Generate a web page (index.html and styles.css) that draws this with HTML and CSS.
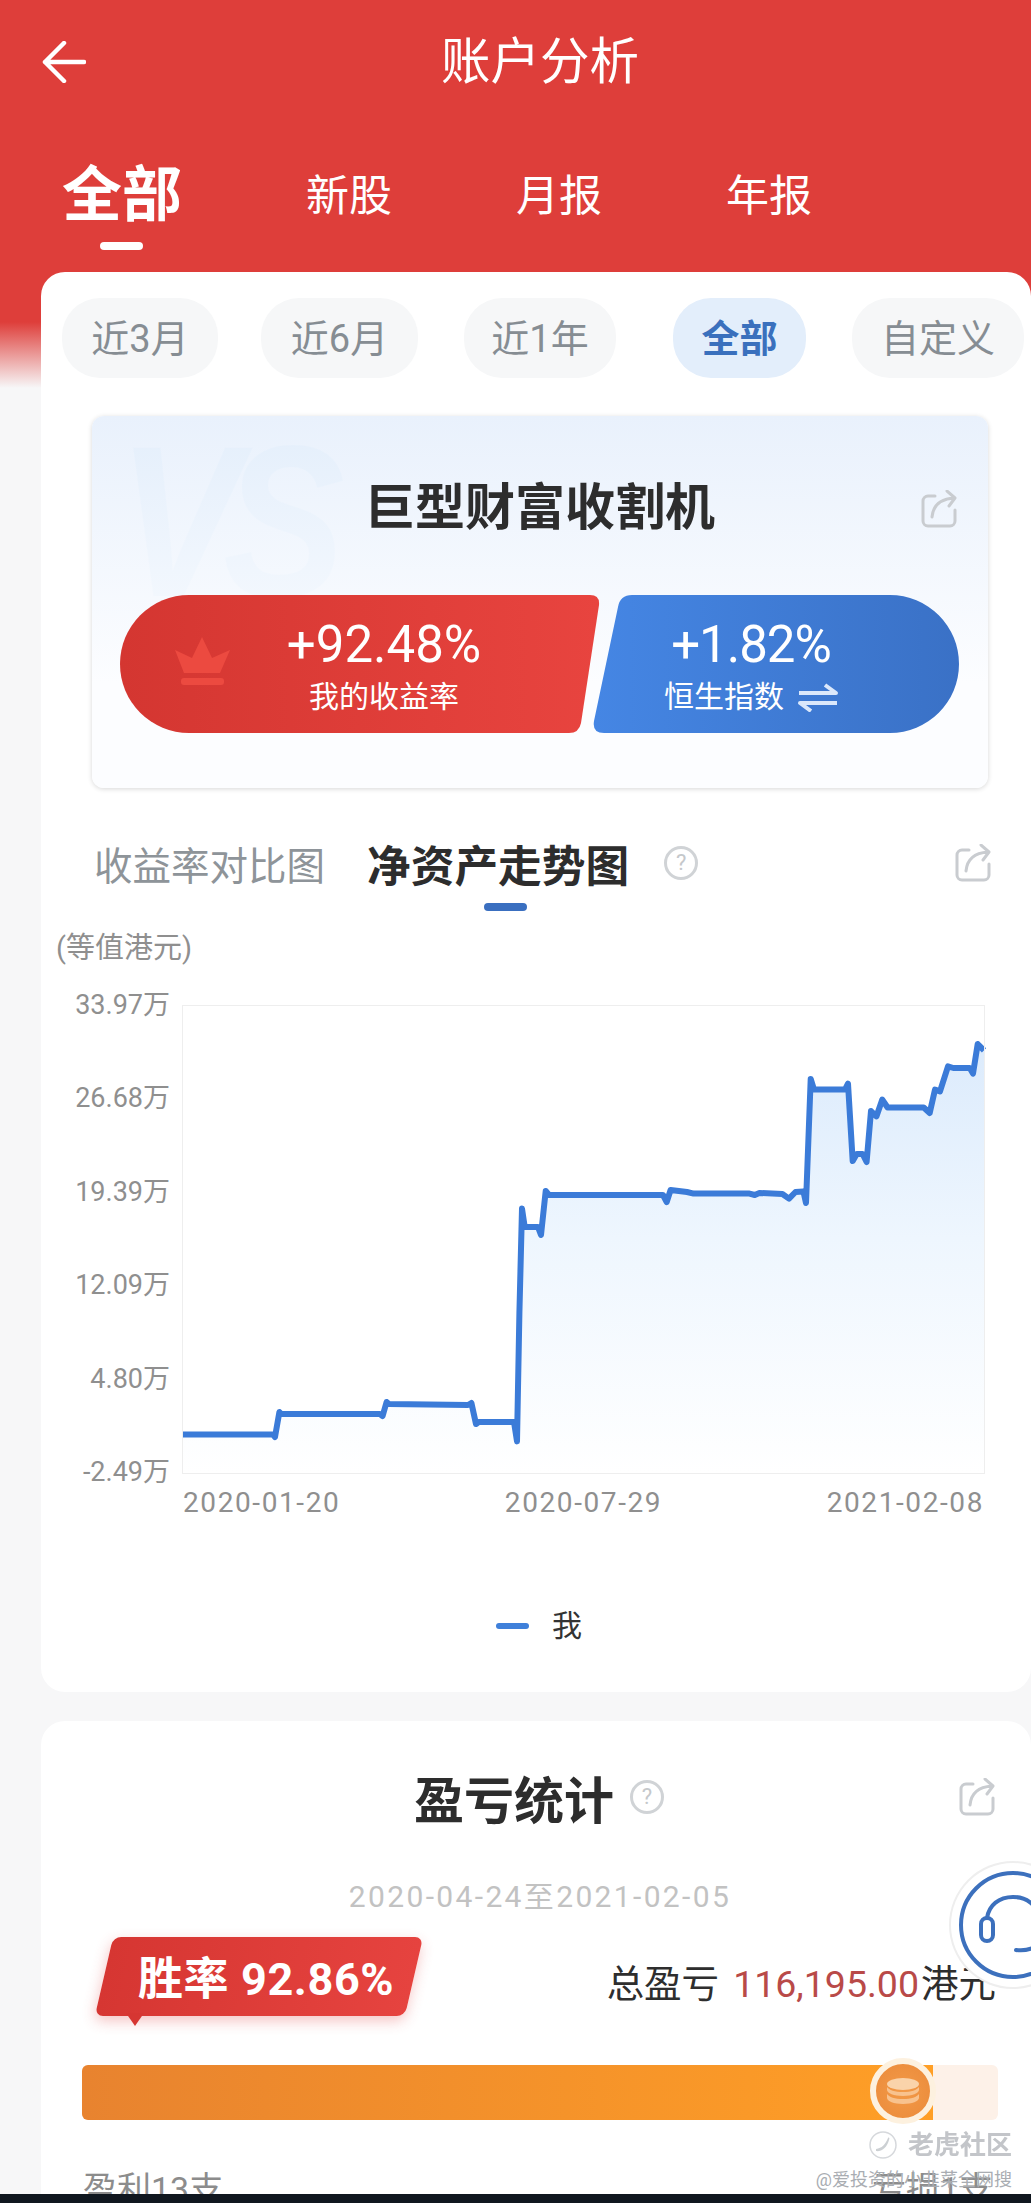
FILE: index.html
```html
<!DOCTYPE html>
<html lang="zh-CN">
<head>
  <meta charset="UTF-8" />
  <meta name="viewport" content="width=device-width, initial-scale=1.0" />
  <title>账户分析</title>
  <link rel="stylesheet" href="styles.css">
</head>
<body>
  <svg class="defs" width="0" height="0">
    <symbol id="share" viewBox="0 0 38 38">
      <path d="M15 6H8a5 5 0 0 0-5 5v20a5 5 0 0 0 5 5h22a5 5 0 0 0 5-5V20" fill="none" stroke="currentColor" stroke-width="3" stroke-linecap="round"/>
      <path d="M12 27C13 16 20 9 34 8M27 1l8 7-6 8" fill="none" stroke="currentColor" stroke-width="3" stroke-linecap="round" stroke-linejoin="round"/>
    </symbol>
  </svg>

  <div class="page">
    <div class="topbar">
      <svg class="back" width="44" height="42" viewBox="0 0 44 42">
        <path d="M42 21H3M22 2 3 21l19 19" fill="none" stroke="#fff" stroke-width="4.5" stroke-linecap="round" stroke-linejoin="round"/>
      </svg>
      <div class="page-title">账户分析</div>
    </div>

    <div class="main-tabs">
      <div class="main-tab main-tab-on">全部<div class="main-tab-bar"></div></div>
      <div class="main-tab">新股</div>
      <div class="main-tab">月报</div>
      <div class="main-tab">年报</div>
    </div>

    <div class="card card-first">
      <div class="pills">
        <div class="pill pill-a">近3月</div>
        <div class="pill pill-b">近6月</div>
        <div class="pill pill-c">近1年</div>
        <div class="pill pill-d pill-on">全部</div>
        <div class="pill pill-e">自定义</div>
      </div>

      <div class="vs-card">
        <div class="vs-mark">VS</div>
        <svg class="vs-share"><use href="#share"/></svg>
        <div class="vs-title">巨型财富收割机</div>
        <div class="vs-row">
          <svg class="vs-shapes" width="839" height="138" viewBox="0 0 839 138">
            <defs>
              <linearGradient id="redpill" x1="0" x2="1" y1="0" y2="0">
                <stop offset="0" stop-color="#d43631"/>
                <stop offset="1" stop-color="#e8443f"/>
              </linearGradient>
              <linearGradient id="bluepill" x1="0" x2="1" y1="0" y2="0">
                <stop offset="0" stop-color="#4586e4"/>
                <stop offset="1" stop-color="#3a71c6"/>
              </linearGradient>
            </defs>
            <path d="M69 0H470Q480 0 479 10L461 128Q459 138 449 138H69A69 69 0 0 1 69 0Z" fill="url(#redpill)"/>
            <path d="M512 0H770A69 69 0 0 1 770 138H484Q472 138 474 126L498 12Q500 0 512 0Z" fill="url(#bluepill)"/>
            <path d="M82 42 92 63l18-8-10 23H64L55 55l17 8Z" fill="#ec4a40"/>
            <rect x="61" y="83" width="43" height="7" rx="3" fill="#ec4a40"/>
          </svg>
          <div class="vs-side vs-side-red">
            <div class="vs-value">+92.48%</div>
            <div class="vs-label">我的收益率</div>
          </div>
          <div class="vs-side vs-side-blue">
            <div class="vs-value">+1.82%</div>
            <div class="vs-label">恒生指数
              <svg class="swap" width="40" height="29" viewBox="0 0 40 29">
                <path d="M1 10H38L27 2M39 20H2l11 8" fill="none" stroke="#dbe8fb" stroke-width="4" stroke-linejoin="round"/>
              </svg>
            </div>
          </div>
        </div>
      </div>

      <div class="chart-tabs">
        <div class="chart-tab">收益率对比图</div>
        <div class="chart-tab chart-tab-on">净资产走势图</div>
        <div class="help">?</div>
        <svg class="share-btn"><use href="#share"/></svg>
      </div>
      <div class="chart-tab-bar"></div>

      <div class="unit">(等值港元)</div>
      <div class="chart">
        <div class="y-axis">
          <span>33.97万</span>
          <span>26.68万</span>
          <span>19.39万</span>
          <span>12.09万</span>
          <span>4.80万</span>
          <span>-2.49万</span>
        </div>
        <div class="plot">
          <svg width="801" height="467" viewBox="0 0 801 467">
            <defs>
              <linearGradient id="area" gradientUnits="userSpaceOnUse" x1="0" x2="0" y1="40" y2="467">
                <stop offset="0" stop-color="#dcebfc"/>
                <stop offset="0.45" stop-color="#eef6fe"/>
                <stop offset="1" stop-color="#ffffff"/>
              </linearGradient>
            </defs>
            <path fill="url(#area)" d="M0 428.6H90L92 431 96.4 406 98.4 408H197L199.6 410 203.6 396 206 398 285 399 288.4 397 293 418 295.6 416H331L334 435.4 336.4 307 339 202.6 341.7 221H355L358 229 362.7 185 366 189H480L483.7 196 487.6 184 504 186 510.6 187.6H566.5L571.8 189 576.4 187 599.4 188 606 192.6 612.5 186 620.4 185.4 623 197 627.7 73 631 83.6H662L665 77.6 669.7 155 673.7 148H679.6L683.6 156 688 105 693.4 110.4 699.3 93.6 704.6 101.5H740.7L746.7 107 752 83.6 757 85.4 765 60.4 770.3 62H786.8L790 67.6 794.7 38 801 44.4V467H0Z"/>
            <path fill="none" stroke="#3b7bd8" stroke-width="6" stroke-linejoin="round" d="M0 428.6H90L92 431 96.4 406 98.4 408H197L199.6 410 203.6 396 206 398 285 399 288.4 397 293 418 295.6 416H331L334 435.4 336.4 307 339 202.6 341.7 221H355L358 229 362.7 185 366 189H480L483.7 196 487.6 184 504 186 510.6 187.6H566.5L571.8 189 576.4 187 599.4 188 606 192.6 612.5 186 620.4 185.4 623 197 627.7 73 631 83.6H662L665 77.6 669.7 155 673.7 148H679.6L683.6 156 688 105 693.4 110.4 699.3 93.6 704.6 101.5H740.7L746.7 107 752 83.6 757 85.4 765 60.4 770.3 62H786.8L790 67.6 794.7 38 801 44.4"/>
          </svg>
        </div>
      </div>
      <div class="x-axis">
        <span>2020-01-20</span>
        <span>2020-07-29</span>
        <span>2021-02-08</span>
      </div>
      <div class="legend">
        <div class="legend-line"></div>
        <div class="legend-name">我</div>
      </div>
    </div>

    <div class="card card-second">
      <div class="stat-head">
        <div class="stat-title">盈亏统计</div>
        <div class="help">?</div>
        <svg class="share-btn"><use href="#share"/></svg>
      </div>
      <div class="stat-date">2020-04-24至2021-02-05</div>
      <div class="stat-row">
        <div class="badge">胜率 92.86%</div>
        <div class="total">总盈亏<span class="total-num">116,195.00</span>港元</div>
      </div>
      <div class="bar">
        <div class="bar-fill" style="width: 92.86%">
          <div class="coin">
            <svg width="32" height="27" viewBox="0 0 32 27">
              <ellipse cx="16" cy="6" rx="16" ry="6" fill="#fad3aa"/>
              <path d="M0 9v3c0 3 7 6 16 6s16-3 16-6V9c-2 3-8 5-16 5S2 12 0 9Z" fill="#f8c28e"/>
              <path d="M0 16v4c0 3 7 6 16 6s16-3 16-6v-4c-2 3-8 5-16 5S2 19 0 16Z" fill="#f8c28e"/>
            </svg>
          </div>
        </div>
      </div>
      <div class="bar-labels">
        <div>盈利13支</div>
        <div>亏损1支</div>
      </div>
    </div>

    <div class="service">
      <svg width="124" height="124" viewBox="0 0 124 124">
        <circle cx="62" cy="62" r="52" fill="none" stroke="#3c70bd" stroke-width="4"/>
        <rect x="30" y="55" width="12" height="23" rx="6" fill="none" stroke="#3c70bd" stroke-width="4"/>
        <path d="M36 55C38 42 48 34 62 34S86 42 88 55M65 87C72 88 78 87 84 84" fill="none" stroke="#3c70bd" stroke-width="4" stroke-linecap="round"/>
      </svg>
    </div>

    <div class="watermark">
      <div class="wm-top">
        <svg width="30" height="28" viewBox="0 0 30 28">
          <circle cx="15" cy="14" r="13" fill="none" stroke="#cfd2d6" stroke-width="1.5"/>
          <path d="M8 20c5 1 11-3 13-11 1-2 0-3-1-2-3 7-6 10-12 11" fill="#c4c8cc"/>
        </svg>
        <span>老虎社区</span>
      </div>
      <div class="wm-user">@爱投资的小韭菜全网搜</div>
    </div>

    <div class="bottom-bar"></div>
  </div>
</body>
</html>
```

FILE: styles.css
```css
* {
  box-sizing: border-box;
}

body {
  margin: 0;
  font-family: Roboto, "Noto Sans CJK SC", sans-serif;
}

.defs {
  position: absolute;
}

.page {
  position: relative;
  width: 1031px;
  height: 2203px;
  overflow: hidden;
  background: linear-gradient(#de3e3a 0, #de3e3a 322px, #f7f7f8 388px);
}

.topbar {
  height: 124px;
  padding-left: 42px;
  display: flex;
  align-items: center;
  gap: 355px;
}

.back {
  flex: none;
}

.page-title {
  font-size: 49.5px;
  line-height: 60px;
  color: #fff;
}

.main-tabs {
  margin-top: 42px;
  padding-left: 62px;
  display: flex;
  gap: 124px;
}

.main-tab {
  font-size: 43px;
  line-height: 60px;
  color: #fff;
}

.main-tab-on {
  font-size: 60px;
  font-weight: 700;
}

.main-tab-bar {
  width: 43px;
  height: 8px;
  margin: 16px 0 0 38px;
  border-radius: 4px;
  background: #fff;
}

.card {
  width: 990px;
  margin-left: 41px;
  border-radius: 24px;
  background: #fff;
}

.card-first {
  height: 1420px;
  margin-top: 22px;
  padding-top: 26px;
}

.pills {
  display: flex;
  padding-left: 21px;
}

.pill {
  height: 80px;
  border-radius: 38px;
  background: #f6f7f8;
  color: #868d93;
  font-size: 38px;
  line-height: 82px;
  text-align: center;
}

.pill-a { width: 156px; }
.pill-b { width: 157px; margin-left: 43px; }
.pill-c { width: 152px; margin-left: 46px; }
.pill-d { width: 133px; margin-left: 57px; }
.pill-e { width: 172px; margin-left: 46px; }

.pill-on {
  background: #e3eefb;
  color: #3a70bd;
  font-weight: 700;
}

.vs-card {
  position: relative;
  width: 896px;
  height: 372px;
  margin: 38px 0 0 51px;
  padding-top: 62px;
  border-radius: 12px;
  overflow: hidden;
  background: linear-gradient(#e9f1fc, #fcfdff 72%);
  box-shadow: 0 1px 5px rgba(0, 0, 0, 0.16);
}

.vs-mark {
  position: absolute;
  left: 26px;
  top: -4px;
  padding-right: 70px;
  font-family: "Liberation Sans", sans-serif;
  font-size: 215px;
  line-height: 220px;
  font-style: italic;
  font-weight: 700;
  letter-spacing: -20px;
  color: transparent;
  background: linear-gradient(#e3eefb, #f5f9fe);
  -webkit-background-clip: text;
  background-clip: text;
  transform: scaleX(0.85);
  transform-origin: left top;
}

.vs-share {
  position: absolute;
  right: 30px;
  top: 74px;
  width: 38px;
  height: 38px;
  color: #c9ccd0;
}

.vs-title {
  position: relative;
  font-size: 50px;
  font-weight: 700;
  line-height: 60px;
  text-align: center;
  color: #2d2d2d;
}

.vs-row {
  position: relative;
  display: flex;
  width: 839px;
  height: 138px;
  margin: 57px 0 0 28px;
  color: #fff;
  text-align: center;
}

.vs-shapes {
  position: absolute;
  left: 0;
  top: 0;
}

.vs-side {
  position: relative;
  padding-top: 25px;
}

.vs-side-red {
  width: 479px;
  padding-left: 49px;
}

.vs-side-blue {
  width: 360px;
  padding-right: 56px;
}

.vs-value {
  font-size: 51px;
  line-height: 50px;
}

.vs-side-blue .vs-value {
  letter-spacing: -1px;
}

.vs-label {
  margin-top: 9px;
  font-size: 30px;
  line-height: 36px;
  display: flex;
  justify-content: center;
  align-items: center;
  gap: 14px;
}

.chart-tabs {
  height: 50px;
  margin-top: 50px;
  padding: 0 39px 0 53px;
  display: flex;
  align-items: center;
}

.chart-tab {
  font-size: 38.5px;
  color: #8e9499;
}

.chart-tab-on {
  margin-left: 42px;
  font-size: 43.7px;
  font-weight: 700;
  color: #2d2d2d;
}

.help {
  width: 34px;
  height: 34px;
  flex: none;
  border: 3px solid #d0d3d6;
  border-radius: 50%;
  color: #c5c8cb;
  font-size: 22px;
  line-height: 27px;
  text-align: center;
}

.chart-tabs .help {
  margin-left: 35px;
}

.share-btn {
  width: 38px;
  height: 38px;
  flex: none;
  margin-left: auto;
  color: #c9ccd0;
}

.chart-tab-bar {
  width: 43px;
  height: 8px;
  margin: 15px 0 0 443px;
  border-radius: 4px;
  background: #3a6fc0;
}

.unit {
  margin: 19px 0 0 15px;
  font-size: 29px;
  line-height: 36px;
  color: #8f8f8f;
}

.chart {
  display: flex;
  gap: 13px;
  height: 498px;
  margin-top: 23px;
}

.y-axis {
  width: 129px;
  padding-top: 1px;
  display: flex;
  flex-direction: column;
  justify-content: space-between;
  text-align: right;
  font-size: 27px;
  line-height: 30px;
  color: #8f8f8f;
}

.plot {
  width: 801px;
  height: 467px;
  margin-top: 17px;
  outline: 1px solid #eeeeee;
}

.plot svg {
  display: block;
  overflow: visible;
}

.x-axis {
  width: 801px;
  margin: 1px 0 0 142px;
  display: flex;
  justify-content: space-between;
  font-size: 28px;
  line-height: 30px;
  letter-spacing: 1.6px;
  color: #8f8f8f;
}

.legend {
  margin: 90px 0 0 455px;
  display: flex;
  align-items: center;
  gap: 23px;
}

.legend-line {
  width: 33px;
  height: 6px;
  border-radius: 3px;
  background: #3f80da;
}

.legend-name {
  font-size: 30px;
  line-height: 36px;
  color: #333;
}

.card-second {
  margin-top: 29px;
  padding-top: 46px;
  height: 600px;
}

.stat-head {
  height: 60px;
  padding: 0 35px 0 373px;
  display: flex;
  align-items: center;
}

.stat-title {
  font-size: 50px;
  font-weight: 700;
  color: #2d2d2d;
}

.stat-head .help {
  margin-left: 16px;
}

.stat-date {
  margin-top: 52px;
  padding-left: 8px;
  font-size: 30px;
  line-height: 36px;
  letter-spacing: 2.35px;
  text-align: center;
  color: #c2c2c2;
}

.stat-row {
  height: 79px;
  margin-top: 22px;
  display: flex;
  align-items: center;
  padding-right: 35px;
}

.badge {
  position: relative;
  z-index: 0;
  width: 310px;
  height: 79px;
  margin-left: 63px;
  padding-left: 34px;
  font-size: 45px;
  font-weight: 700;
  letter-spacing: 0.6px;
  line-height: 85px;
  color: #fff;
  white-space: nowrap;
}

.badge::before {
  content: "";
  position: absolute;
  z-index: -1;
  inset: 0;
  border-radius: 8px;
  background: linear-gradient(90deg, #d63632, #e6433f);
  box-shadow: 0 5px 14px rgba(222, 60, 60, 0.3);
  transform: skewX(-13deg);
}

.badge::after {
  content: "";
  position: absolute;
  z-index: -1;
  left: 22px;
  top: 76px;
  width: 18px;
  height: 13px;
  background: #d63632;
  clip-path: polygon(0 0, 100% 0, 50% 100%);
}

.total {
  margin: 14px 0 0 auto;
  font-size: 37.5px;
  line-height: 44px;
  color: #2e2e2e;
}

.total-num {
  margin: 0 2px 0 14px;
  color: #b94a48;
}

.bar {
  width: 916px;
  height: 55px;
  margin: 49px 0 0 41px;
  border-radius: 6px;
  background: #fdf1e8;
}

.bar-fill {
  position: relative;
  height: 55px;
  border-radius: 6px 0 0 6px;
  background: linear-gradient(90deg, #e8832f, #ff9f26);
}

.coin {
  position: absolute;
  right: -3px;
  top: -7px;
  width: 66px;
  height: 66px;
  border: 6px solid #fdf1df;
  border-radius: 50%;
  background: radial-gradient(circle, #f39a48, #ea8a3a);
  display: flex;
  align-items: center;
  justify-content: center;
}

.bar-labels {
  margin-top: 47px;
  padding: 0 38px 0 42px;
  display: flex;
  justify-content: space-between;
  font-size: 34px;
  line-height: 44px;
  color: #8c8c8c;
}

.service {
  position: absolute;
  left: 951px;
  top: 1863px;
  width: 124px;
  height: 124px;
  border-radius: 50%;
  background: #fff;
  box-shadow: 0 0 0 2px #eeeeee;
}

.service svg {
  display: block;
}

.watermark {
  position: absolute;
  right: 19px;
  top: 2128px;
  color: #b9bcc0;
  text-align: right;
}

.wm-top {
  display: flex;
  align-items: center;
  justify-content: flex-end;
  gap: 10px;
  font-size: 26px;
  font-weight: 700;
  line-height: 34px;
  opacity: 0.85;
}

.wm-user {
  margin-top: 6px;
  font-size: 18px;
  line-height: 24px;
  color: #a9adb2;
}

.bottom-bar {
  position: absolute;
  left: 0;
  bottom: 0;
  width: 100%;
  height: 9px;
  background: #10171f;
}
```
